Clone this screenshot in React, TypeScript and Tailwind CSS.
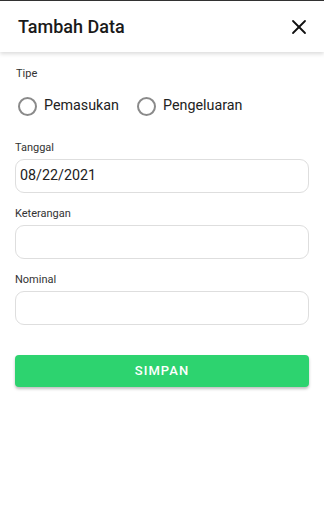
import { X } from "lucide-react";

function Radio({ label }: { label: string }) {
  return (
    <label className="flex items-center gap-[7px]">
      <span className="block w-[19px] h-[19px] rounded-full border-2 border-[#8a8a8a]" />
      <span className="text-[14.3px] text-[#222]">{label}</span>
    </label>
  );
}

function Field({ label, value }: { label: string; value?: string }) {
  return (
    <div className="flex flex-col">
      <span className="text-[11px] leading-4 text-[#333]">{label}</span>
      <div className="mt-[3px] h-[34px] rounded-[9px] border border-[#dedede] bg-white px-[4px] flex items-center text-[14.3px] text-[#222]">
        {value}
      </div>
    </div>
  );
}

export default function App() {
  return (
    <div className="w-[324px] h-[512px] bg-white font-['Roboto',sans-serif] border-t border-[#333]">
      <header className="h-[51px] flex items-center justify-between pl-[18px] pr-[13px] bg-white shadow-[0_2px_4px_rgba(0,0,0,0.14)]">
        <h1 className="text-[18px] font-medium text-[#1a1a1a]">Tambah Data</h1>
        <X size={24} strokeWidth={1.8} className="text-[#111]" />
      </header>
      <main className="px-[15px]">
        <div className="mt-[14px] pl-[1px] text-[11px] leading-4 text-[#333]">Tipe</div>
        <div className="mt-[14px] h-[20px] flex items-center gap-[18px] pl-[3px]">
          <Radio label="Pemasukan" />
          <Radio label="Pengeluaran" />
        </div>
        <div className="mt-[24px] flex flex-col gap-[13px]">
          <Field label="Tanggal" value="08/22/2021" />
          <Field label="Keterangan" />
          <Field label="Nominal" />
        </div>
        <button className="mt-[30px] w-full h-[32px] rounded-[4px] bg-[#2dd36f] text-white text-[13px] font-medium tracking-[0.08em] shadow-[0_2px_3px_rgba(0,0,0,0.25)]">
          SIMPAN
        </button>
      </main>
    </div>
  );
}
